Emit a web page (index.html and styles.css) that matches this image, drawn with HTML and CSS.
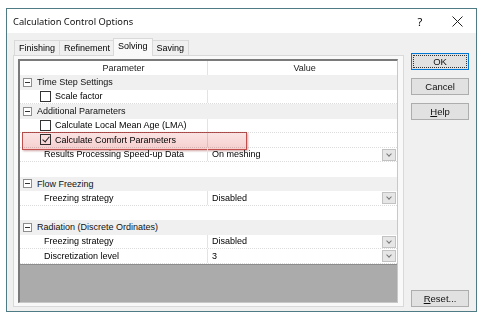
FILE: index.html
```html
<!DOCTYPE html>
<html lang="en">
<head>
    <meta charset="UTF-8">
    <title>Calculation Control Options</title>
    <link rel="stylesheet" href="styles.css">
</head>
<body>
    <div class="dialog">
        <!-- Title bar -->
        <div class="titlebar">
            <span class="title">Calculation Control Options</span>
            <span class="help-btn">?</span>
            <span class="close-btn">
                <svg width="11" height="11" viewBox="0 0 11 11"><path d="M0.5 0.5 L10.5 10.5 M10.5 0.5 L0.5 10.5" stroke="#222" stroke-width="1"/></svg>
            </span>
        </div>

        <div class="content">
            <div class="left">
                <!-- Tabs -->
                <div class="tabs">
                    <div class="tab">Finishing</div>
                    <div class="tab">Refinement</div>
                    <div class="tab active">Solving</div>
                    <div class="tab">Saving</div>
                </div>

                <div class="panel">
                    <div class="grid">
                        <div class="row header">
                            <div class="cell name">Parameter</div>
                            <div class="cell value">Value</div>
                        </div>

                        <div class="row category">
                            <span class="expander"></span>Time Step Settings
                        </div>
                        <div class="row item">
                            <div class="cell name"><span class="check"></span>Scale factor</div>
                            <div class="cell value"></div>
                        </div>

                        <div class="row category">
                            <span class="expander"></span>Additional Parameters
                        </div>
                        <div class="row item">
                            <div class="cell name"><span class="check"></span>Calculate Local Mean Age (LMA)</div>
                            <div class="cell value"></div>
                        </div>
                        <div class="row item highlighted">
                            <div class="cell name"><span class="check checked"></span>Calculate Comfort Parameters</div>
                            <div class="cell value"></div>
                            <div class="mark"></div>
                        </div>
                        <div class="row item">
                            <div class="cell name plain">Results Processing Speed-up Data</div>
                            <div class="cell value">On meshing<span class="drop"></span></div>
                        </div>
                        <div class="row blank"></div>

                        <div class="row category">
                            <span class="expander"></span>Flow Freezing
                        </div>
                        <div class="row item">
                            <div class="cell name plain">Freezing strategy</div>
                            <div class="cell value">Disabled<span class="drop"></span></div>
                        </div>
                        <div class="row blank"></div>

                        <div class="row category">
                            <span class="expander"></span>Radiation (Discrete Ordinates)
                        </div>
                        <div class="row item">
                            <div class="cell name plain">Freezing strategy</div>
                            <div class="cell value">Disabled<span class="drop"></span></div>
                        </div>
                        <div class="row item">
                            <div class="cell name plain">Discretization level</div>
                            <div class="cell value">3<span class="drop"></span></div>
                        </div>

                        <div class="empty"></div>
                    </div>
                </div>
            </div>

            <!-- Buttons -->
            <div class="buttons">
                <button class="btn default">OK</button>
                <button class="btn">Cancel</button>
                <button class="btn"><u>H</u>elp</button>
                <div class="spacer"></div>
                <button class="btn"><u>R</u>eset...</button>
            </div>
        </div>
    </div>
</body>
</html>
```

FILE: styles.css
```css
/* Dialog styles */
body {
    margin: 0;
    background: #fff;
    font-family: 'Liberation Sans', Arial, sans-serif;
    font-size: 9px;
    color: #000;
    white-space: nowrap;
}

.dialog {
    margin: 8px 0 0 6px;
    width: 471px;
    height: 304px;
    border: 1px solid #4f7c84;
    box-sizing: border-box;
    display: flex;
    flex-direction: column;
    background: #f0f0f0;
}

.titlebar {
    height: 24px;
    background: #fff;
    display: flex;
    align-items: center;
    padding-left: 6px;
}

.title {
    flex: 1;
    font-family: 'Noto Sans', sans-serif;
    font-size: 9.3px;
    color: #111;
}

.help-btn {
    font-family: 'Noto Sans', sans-serif;
    font-size: 11px;
    width: 36px;
    text-align: center;
}

.close-btn {
    width: 38px;
    display: flex;
    justify-content: center;
}

.content {
    flex: 1;
    display: flex;
    padding: 5px 7px 4px 6px;
    gap: 7px;
}

.left {
    width: 392px;
    display: flex;
    flex-direction: column;
}

.tabs {
    display: flex;
    height: 17px;
    align-items: flex-end;
    padding-left: 1px;
    position: relative;
    z-index: 1;
}

.tab {
    height: 15px;
    line-height: 14px;
    padding: 0 4px;
    border: 1px solid #d9d9d9;
    border-bottom: none;
    background: #f0f0f0;
    box-sizing: border-box;
    margin-right: -1px;
}

.tab.active {
    height: 18px;
    line-height: 14px;
    background: #f9f9f9;
    padding: 0 4px;
    margin: 0 -1px 0 -1px;
    position: relative;
    top: 1px;
}

.panel {
    flex: 1;
    background: #f9f9f9;
    border: 1px solid #d9d9d9;
    padding: 3px 5px 3px 4px;
}

.grid {
    height: 100%;
    box-sizing: border-box;
    border-style: solid;
    border-width: 2px 1px 1px 2px;
    border-color: #7a7a7a #c8c8c8 #c8c8c8 #7a7a7a;
    background: #fff;
    display: flex;
    flex-direction: column;
}

.row {
    height: 14.5px;
    display: flex;
    align-items: center;
    flex-shrink: 0;
    box-sizing: border-box;
    position: relative;
}

.row.header {
    height: 14px;
    color: #222;
}

.row.header .cell {
    justify-content: center;
}

.row.category {
    background: #f0f0f0;
    padding-left: 3px;
    color: #111;
}

.row.item {
    border-bottom: 1px dotted #dcdcdc;
}

.cell {
    height: 100%;
    display: flex;
    align-items: center;
    box-sizing: border-box;
}

.cell.name {
    width: 188px;
    border-right: 1px solid #e3e3e3;
    padding-left: 20px;
}

.cell.name.plain {
    padding-left: 24px;
}

.cell.value {
    flex: 1;
    padding-left: 4px;
    position: relative;
}

.expander {
    width: 7px;
    height: 7px;
    border: 1px solid #8e8e8e;
    background: #fff;
    margin-right: 5px;
    position: relative;
}

.expander::after {
    content: "";
    position: absolute;
    left: 1px;
    top: 3px;
    width: 5px;
    height: 1px;
    background: #333;
}

.check {
    width: 9px;
    height: 9px;
    border: 1px solid #333;
    background: #fff;
    margin-right: 4px;
    position: relative;
}

.check.checked::after {
    content: "";
    position: absolute;
    left: 3px;
    top: 0px;
    width: 3px;
    height: 6px;
    border: solid #222;
    border-width: 0 1px 1px 0;
    transform: rotate(40deg);
}

.drop {
    position: absolute;
    right: 1px;
    top: 1px;
    width: 14px;
    height: 12px;
    box-sizing: border-box;
    border: 1px solid #c2c2c2;
    background: #e6e6e6;
}

.drop::after {
    content: "";
    position: absolute;
    left: 4px;
    top: 2px;
    width: 3px;
    height: 3px;
    border: solid #777;
    border-width: 0 1px 1px 0;
    transform: rotate(45deg);
}

.mark {
    position: absolute;
    left: 2px;
    top: -1px;
    width: 225px;
    height: 18px;
    box-sizing: border-box;
    border: 1px solid #c0504d;
    background: linear-gradient(#fbe3e3, #f6cfcf);
    box-shadow: 1px 1px 2px rgba(150, 60, 60, 0.45);
    mix-blend-mode: multiply;
    pointer-events: none;
}

.empty {
    flex: 1;
    background: #ababab;
    border-top: 1px solid #8c8c8c;
}

.buttons {
    width: 58px;
    display: flex;
    flex-direction: column;
    gap: 8px;
    padding-top: 15px;
}

.spacer {
    flex: 1;
}

.btn {
    height: 17px;
    padding: 0;
    font-family: 'Liberation Sans', Arial, sans-serif;
    font-size: 9.5px;
    color: #111;
    background: #e1e1e1;
    border: 1px solid #adadad;
    box-sizing: border-box;
}

.btn.default {
    border: 1px solid #0078d7;
    outline: 1px dotted #333;
    outline-offset: -3px;
}
```
